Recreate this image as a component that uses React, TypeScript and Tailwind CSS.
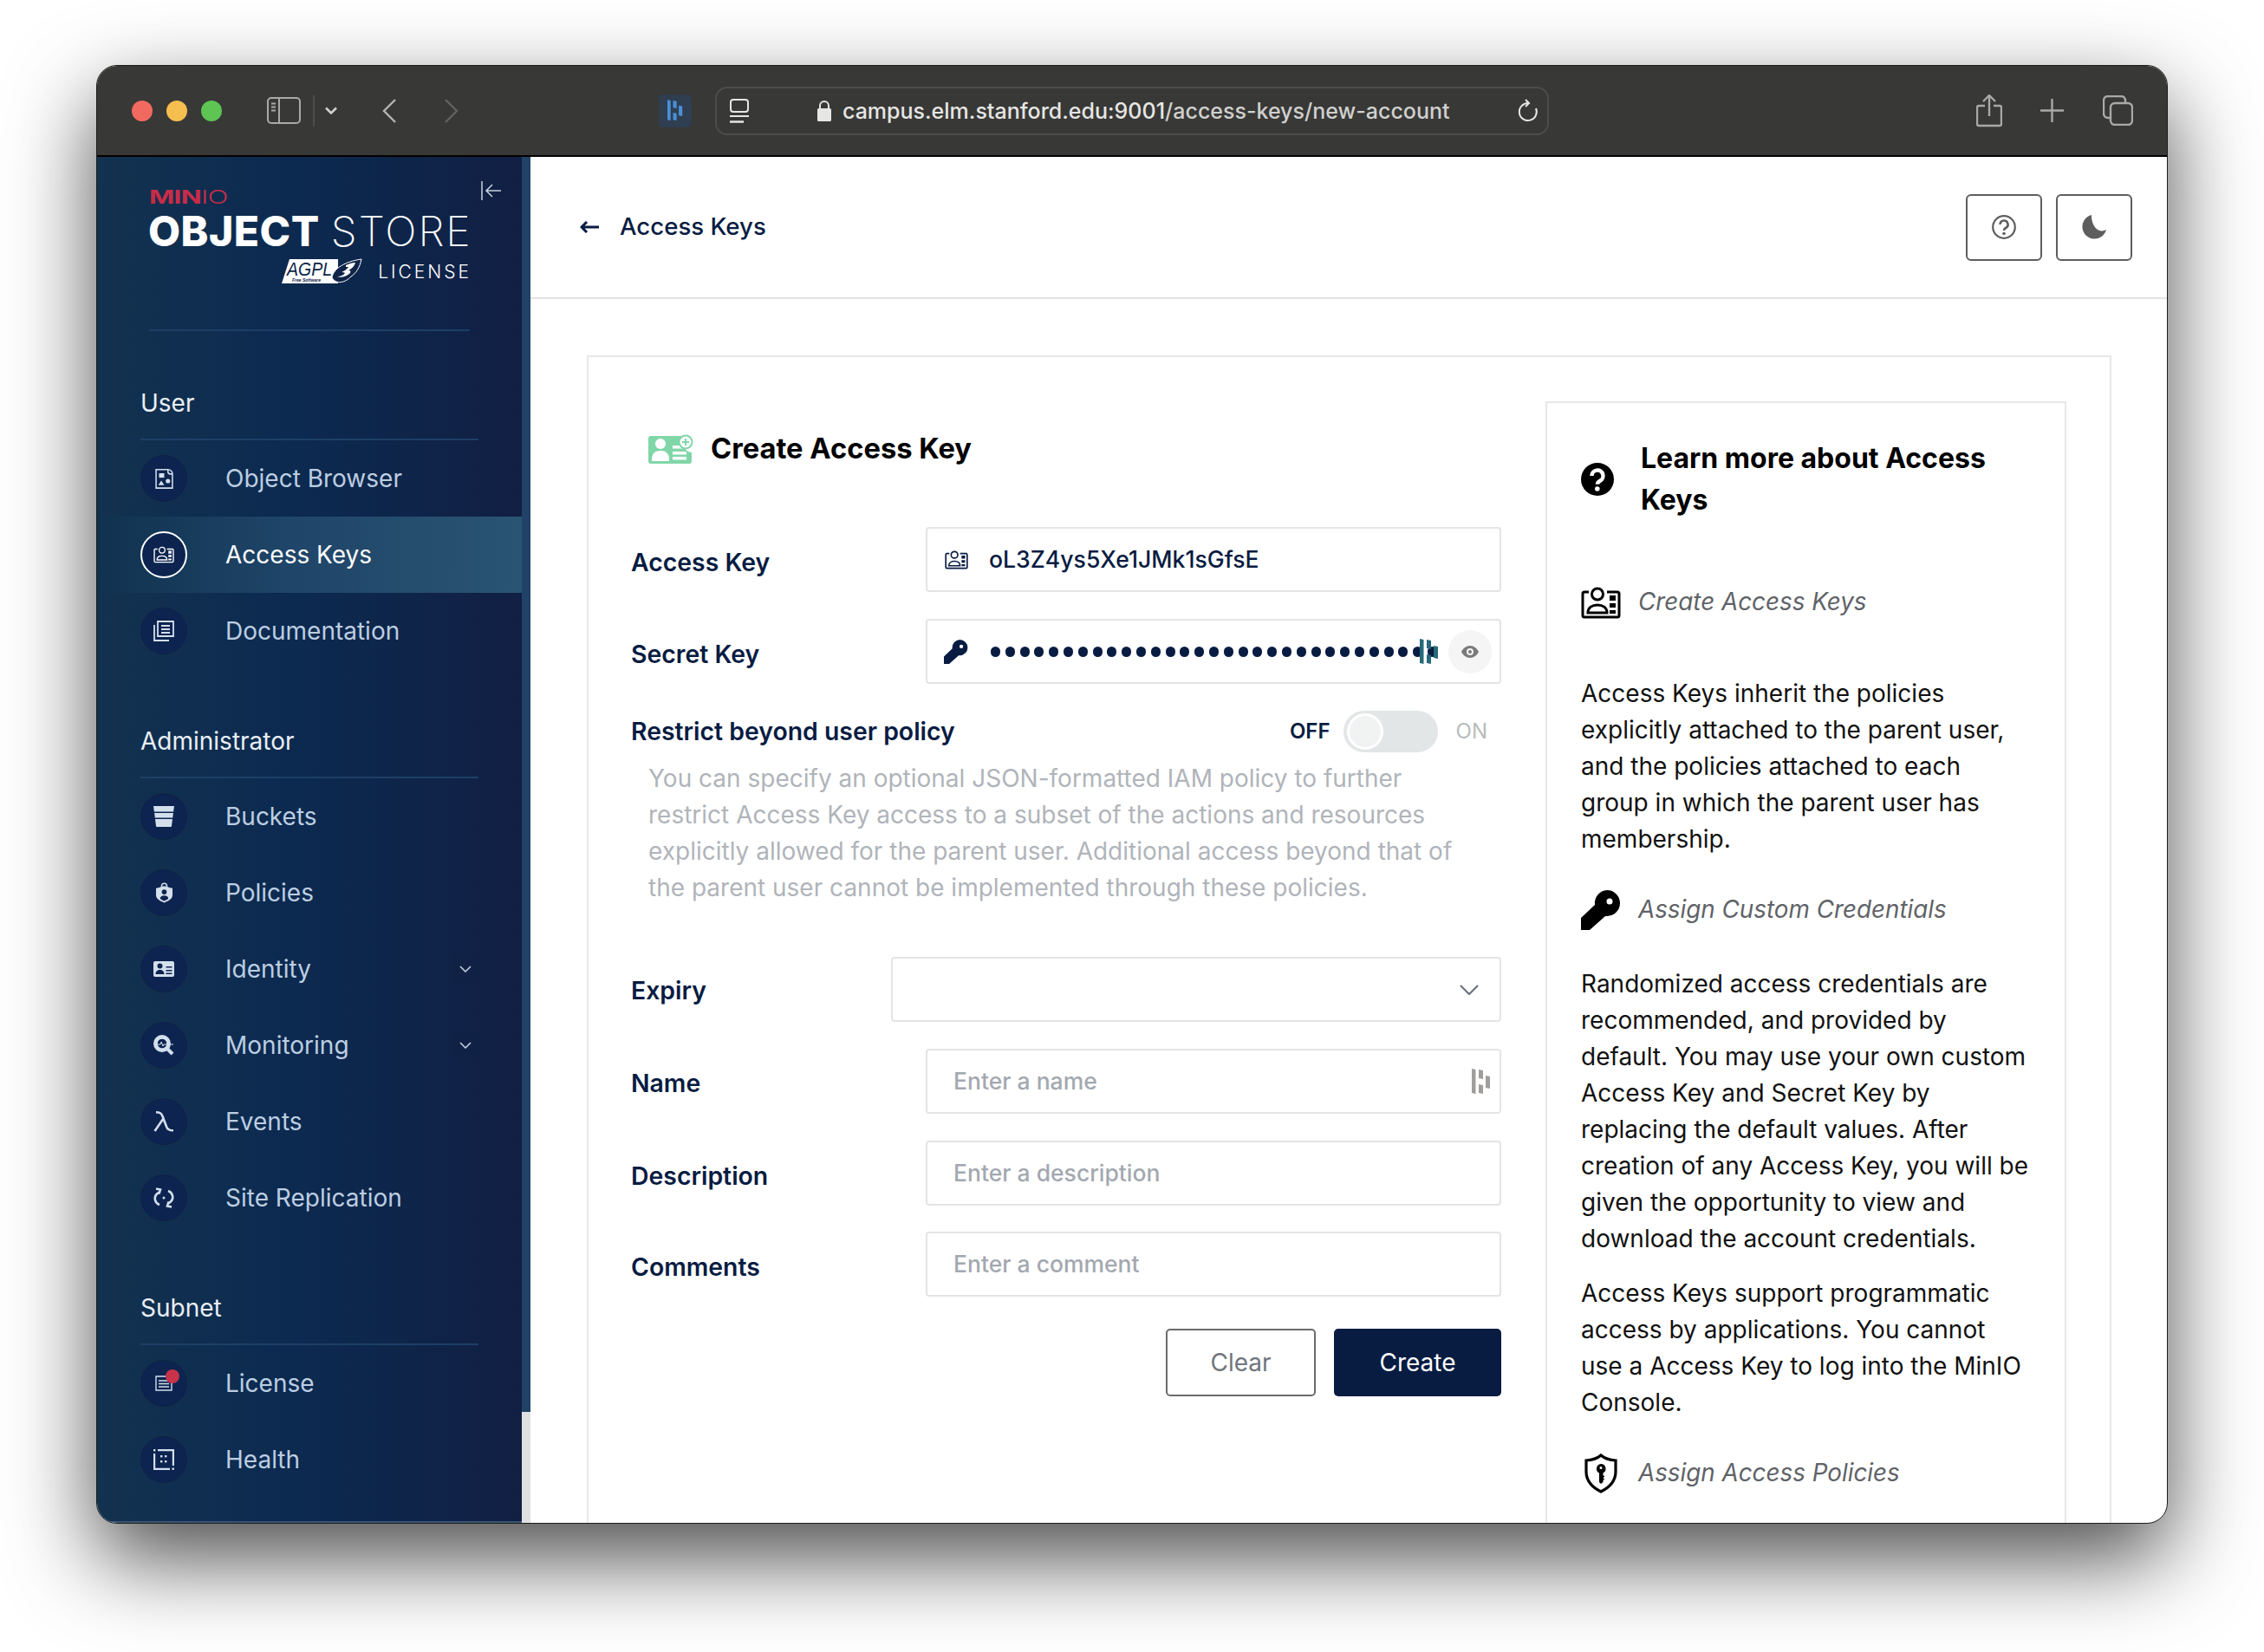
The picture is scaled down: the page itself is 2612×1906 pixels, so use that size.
import React from "react";

type IconProps = { className?: string };

const Dash = ({ className = "" }: IconProps) => (
  <svg viewBox="0 0 22 30" className={className} fill="currentColor">
    <path d="M0 0l4.500 1v28l-4.500-1zM8 1l5 1v10l-5-1zM8 18l5 1v10l-5-1zM16 8l5 1v14l-5-1z" />
  </svg>
);

const IdCard = ({ className = "", sw = 3 }: IconProps & { sw?: number }) => (
  <svg viewBox="0 0 46 37" className={className} fill="none" stroke="currentColor" strokeWidth={sw}>
    <path d="M9 6H4a2 2 0 0 0-2 2v25a2 2 0 0 0 2 2h38a2 2 0 0 0 2-2V8a2 2 0 0 0-2-2H30" />
    <circle cx="19" cy="8.500" r="6.500" />
    <path d="M8 30c0-6 5-9 11-9s11 3 11 9z" />
    <path d="M33 10h7v6h-7zM33 19h7v5h-7zM33 27h7v4h-7z" fill="currentColor" stroke="none" />
  </svg>
);

const KeyIcon = ({ className = "" }: IconProps) => (
  <svg viewBox="0 0 46 46" className={className} fill="currentColor">
    <path
      fillRule="evenodd"
      d="M30 0a15 15 0 0 1 0 30h-2L10 46H0V32l16-15A15 15 0 0 1 30 0zm3 9.500a3.500 3.500 0 1 0 0 7 3.500 3.500 0 0 0 0-7z"
    />
  </svg>
);

const Shield = ({ className = "" }: IconProps) => (
  <svg viewBox="0 0 40 46" className={className}>
    <path d="M20 2c4 3.500 10 5.500 17 6v13c0 11-7 18-17 23C10 39 3 32 3 21V8c7-.5 13-2.500 17-6z" fill="none" stroke="currentColor" strokeWidth="3.200" />
    <path fillRule="evenodd" fill="currentColor" d="M20 12a5.500 5.500 0 0 1 2.500 10.400V25l2 1.500-2 1.500 1.500 1.500-1.500 1.500v2L20 35l-2-2V22.400A5.500 5.500 0 0 1 20 12zm0 3a1.500 1.500 0 1 0 0 3 1.500 1.500 0 0 0 0-3z" />
  </svg>
);

const I = {
  browser: (
    <svg viewBox="0 0 24 28" className="w-[21px] h-[24px]" fill="none" stroke="currentColor" strokeWidth="1.800">
      <path d="M1 2h16v3a3 3 0 0 0 3 3h3v19H1zM17 2a6 6 0 0 1 6 6" />
      <rect x="5" y="7" width="7" height="6" fill="currentColor" stroke="none" />
      <path d="M8 17l4 6H4z" fill="currentColor" stroke="none" />
      <circle cx="17" cy="17.500" r="3" fill="currentColor" stroke="none" />
    </svg>
  ),
  keys: <IdCard className="w-[24px] h-[20px]" sw={2.600} />,
  docs: (
    <svg viewBox="0 0 24 24" className="w-[24px] h-[24px]" fill="none" stroke="currentColor" strokeWidth="1.800">
      <path d="M5 1h18v17H5zM9 6h10M9 10h10M9 14h10M1 5v18h17" />
    </svg>
  ),
  bucket: (
    <svg viewBox="0 0 24 24" className="w-[24px] h-[24px]" fill="currentColor">
      <path d="M0 0h24l-.9 6.500H.9zM1.100 8h21.800l-.7 5.500H1.800zM2 15h20l-1 8a1 1 0 0 1-1 1H4a1 1 0 0 1-1-1z" />
    </svg>
  ),
  policy: (
    <svg viewBox="0 0 20 24" className="w-[19px] h-[24px]" fill="currentColor">
      <path fillRule="evenodd" d="M6 5V4a4 4 0 0 1 8 0v1c2 .8 4 1.200 6 1.500V15c0 4-4 7-10 9C4 22 0 19 0 15V6.500C2 6.200 4 5.800 6 5zm1.500-.6c1.600-.5 3.400-.5 5 0V4a2.500 2.500 0 0 0-5 0zM10 8a3 3 0 1 0 0 6 3 3 0 0 0 0-6zm-5 11c2 1.500 3.500 2.300 5 3 1.500-.7 3-1.500 5-3 0-2-2-3.500-5-3.500S5 17 5 19z" />
    </svg>
  ),
  identity: (
    <svg viewBox="0 0 24 18" className="w-[24px] h-[18px]" fill="currentColor">
      <path fillRule="evenodd" d="M2 0h20a2 2 0 0 1 2 2v14a2 2 0 0 1-2 2H2a2 2 0 0 1-2-2V2a2 2 0 0 1 2-2zm5.500 2.500a3 3 0 1 0 0 6 3 3 0 0 0 0-6zM2.500 15h10c0-3-2-5-5-5s-5 2-5 5zM14.500 6v1.400h7V6zm0 4v1.400h7V10zm0 3.500v1.400h7v-1.400z" />
    </svg>
  ),
  monitor: (
    <svg viewBox="0 0 24 24" className="w-[24px] h-[24px]" fill="none">
      <circle cx="10" cy="10" r="7.500" stroke="currentColor" strokeWidth="5" />
      <path d="M15 15l7 7" stroke="currentColor" strokeWidth="4" />
      <circle cx="10" cy="10" r="5.200" fill="#0d2450" />
      <path d="M5 11h3l1.200-3 1.800 5 1-2h11" stroke="currentColor" strokeWidth="1" />
    </svg>
  ),
  lambda: (
    <svg viewBox="0 0 24 24" className="w-[24px] h-[24px]" fill="none" stroke="currentColor" strokeWidth="2.600">
      <path d="M3 1.300c4 0 6 .5 7.500 4.500l4.500 12c1 3 3 4.500 8 4.500M11.500 8.500L1.500 23" />
    </svg>
  ),
  repl: (
    <svg viewBox="0 0 24 24" className="w-[24px] h-[24px]" fill="none" stroke="currentColor" strokeWidth="2.600">
      <path d="M7 5.500C3 7.500 1.200 11 2 14.500c.6 2.600 2.500 4.700 5 5.500M17 18.500c4-2 5.800-5.500 5-9-.6-2.600-2.500-4.700-5-5.500" />
      <path d="M3 1.500l5 1-1.500 5M21 22.500l-5-1 1.500-5" />
      <circle cx="12" cy="12" r="1.500" fill="currentColor" stroke="none" />
    </svg>
  ),
  license: (
    <svg viewBox="0 0 20 18" className="w-[20px] h-[18px]" fill="none" stroke="currentColor" strokeWidth="1.400">
      <path d="M1 1h18v16H1zM4 6h12M4 9.500h12M4 13h12" />
    </svg>
  ),
  health: (
    <svg viewBox="0 0 24 24" className="w-[24px] h-[24px]" fill="none">
      <path d="M5 1h18v18M1 5v18h18" stroke="currentColor" strokeWidth="2.400" />
      <g fill="currentColor">
        <rect x="0" y="0" width="2.400" height="2.400" />
        <rect x="21.500" y="21.500" width="2.400" height="2.400" />
        <rect x="8" y="7" width="2.400" height="2.400" />
        <rect x="13" y="7" width="2.400" height="2.400" />
        <rect x="8" y="13" width="2.400" height="2.400" />
        <rect x="13" y="13" width="2.400" height="2.400" />
      </g>
    </svg>
  ),
};

const Chevron = ({ className = "" }: IconProps) => (
  <svg viewBox="0 0 14 8" className={className} fill="none" stroke="currentColor" strokeWidth="1.500">
    <path d="M1 1l6 6 6-6" />
  </svg>
);

const Item = ({ icon, label, active, caret, dot }: { icon: React.ReactNode; label: string; active?: boolean; caret?: boolean; dot?: boolean }) => (
  <div
    className={
      "h-[88px] flex items-center pl-[50px] pr-[50px] " +
      (active ? "bg-[linear-gradient(90deg,#10324f_0%,#1f4568_45%,#2a5473_100%)] text-white" : "text-[#bccee2]")
    }
  >
    <div
      className={
        "relative w-[54px] h-[54px] rounded-full bg-[#0d2450] flex items-center justify-center " +
        (active ? "border-2 border-white text-white" : "border border-[#0f2246] text-[#d3dfec]")
      }
    >
      {icon}
      {dot && <span className="absolute top-[10px] right-[8px] w-[16px] h-[16px] rounded-full bg-[#c83349]" />}
    </div>
    <span className="ml-[44px] flex-1 text-[28px] leading-[36px]">{label}</span>
    {caret && (
      <span className="w-[30px] h-[30px] rounded-[4px] bg-[#0f2145] flex items-center justify-center">
        <Chevron className="w-[14px] h-[8px] text-[#c8d6e6]" />
      </span>
    )}
  </div>
);

const SectionHead = ({ label }: { label: string }) => (
  <div className="mt-[54px] ml-[50px] w-[390px] h-[72px] pb-[12px] border-b-2 border-[#1d3f66] flex items-center text-[28px] text-[#e9eff6]">
    {label}
  </div>
);

const Field = ({ label, children, labelW = "w-[340px]", labelPt = "pt-[8px]", className = "" }: { label: string; children: React.ReactNode; labelW?: string; labelPt?: string; className?: string }) => (
  <div className={"h-[75px] flex items-center " + className}>
    <div className={labelW + " " + labelPt + " shrink-0 text-[28.400px] font-semibold text-[#081c42]"}>{label}</div>
    {children}
  </div>
);

const inputBox = "flex-1 h-full border-2 border-[#e4e4e4] rounded-[4px] flex items-center";

const HelpRow = ({ icon, label, className = "" }: { icon: React.ReactNode; label: string; className?: string }) => (
  <div className={"h-[44px] flex items-center " + className}>
    <div className="w-[66px] shrink-0 flex items-center">{icon}</div>
    <span className="italic text-[27.800px] text-[#5f6368]">{label}</span>
  </div>
);

const Para = ({ lines, className = "" }: { lines: string[]; className?: string }) => (
  <p className={"text-[28px] leading-[42px] text-[#111] whitespace-nowrap " + className}>
    {lines.map((l) => (
      <span key={l} className="block">{l}</span>
    ))}
  </p>
);

export default function App() {
  return (
    <div className="w-[2612px] h-[1906px] bg-white pt-[75px] pl-[111px] overflow-hidden [font-family:Inter,sans-serif]">
      <div className="w-[2390px] h-[1683px] rounded-[24px] overflow-hidden border border-[#1c1c1c] shadow-[0_40px_100px_rgba(0,0,0,0.7)] flex flex-col bg-white">
        {/* title bar */}
        <div className="h-[105px] shrink-0 bg-[#383836] border-b-2 border-black flex items-center pl-[40px] text-[#a9a9a7]">
          <span className="w-[24px] h-[24px] rounded-full bg-[#f26a5f]" />
          <span className="ml-[16px] w-[24px] h-[24px] rounded-full bg-[#f5bf4f]" />
          <span className="ml-[16px] w-[24px] h-[24px] rounded-full bg-[#5ec454]" />
          <svg viewBox="0 0 39 31" className="ml-[52px] w-[39px] h-[31px]" fill="none" stroke="currentColor" strokeWidth="2">
            <rect x="1" y="1" width="37" height="29" rx="4" />
            <path d="M14 1v29M5 7.500h5M5 11.500h5M5 15.500h5" />
          </svg>
          <span className="ml-[14px] w-[2px] h-[36px] bg-[#4d4d4b]" />
          <Chevron className="ml-[12px] w-[14px] h-[9px] text-[#d2d2d0] [stroke-width:2.500]" />
          <svg viewBox="0 0 16 28" className="ml-[52px] w-[16px] h-[28px] text-[#b5b5b3]" fill="none" stroke="currentColor" strokeWidth="2.400">
            <path d="M15 1L2 14l13 13" />
          </svg>
          <svg viewBox="0 0 16 28" className="ml-[56px] w-[16px] h-[28px] text-[#626260]" fill="none" stroke="currentColor" strokeWidth="2.400">
            <path d="M1 1l13 13L1 27" />
          </svg>
          <div className="ml-[231px] w-[38px] h-[38px] rounded-[5px] bg-[#2f3e50] flex items-center justify-center">
            <Dash className="w-[18px] h-[25px] text-[#4a8fd8]" />
          </div>
          <div className="ml-[27px] w-[962px] h-[56px] rounded-[14px] border-2 border-[#4c4c4a] flex items-center pl-[14px] text-[#e6e6e4]">
            <svg viewBox="0 0 24 28" className="w-[24px] h-[28px]" fill="none" stroke="currentColor" strokeWidth="2">
              <rect x="2" y="1" width="20" height="14" rx="3" />
              <path d="M1 20h22" />
              <path d="M1 26.500h16" strokeWidth="2.500" />
            </svg>
            <svg viewBox="0 0 16 24" className="ml-[78px] w-[16px] h-[24px]" fill="currentColor">
              <path d="M2 9V6a6 6 0 0 1 12 0v3h.500A1.500 1.500 0 0 1 16 10.500v12a1.500 1.500 0 0 1-1.500 1.500h-13A1.500 1.500 0 0 1 0 22.500v-12A1.500 1.500 0 0 1 1.500 9zm2 0h8V6a4 4 0 0 0-8 0z" />
            </svg>
            <span className="ml-[13px] w-[700px] pt-[2px] text-[25px] font-medium whitespace-nowrap">
              campus.elm.stanford.edu:9001<span className="text-[#d0d0ce]">/access-keys/new-account</span>
            </span>
            <svg viewBox="0 0 24 28" className="ml-[79px] w-[24px] h-[28px]" fill="none" stroke="currentColor" strokeWidth="2">
              <path d="M12 5A10 10 0 1 0 21 11" />
              <path d="M9 1l4 4-4 4" />
            </svg>
          </div>
          <svg viewBox="0 0 30 38" className="ml-[493px] w-[30px] h-[38px]" fill="none" stroke="currentColor" strokeWidth="2.400">
            <path d="M10 13H3a2 2 0 0 0-2 2v19a2 2 0 0 0 2 2h24a2 2 0 0 0 2-2V15a2 2 0 0 0-2-2h-7M15 25V2M8 8l7-7 7 7" />
          </svg>
          <svg viewBox="0 0 27 27" className="ml-[44px] w-[27px] h-[27px]" fill="none" stroke="currentColor" strokeWidth="2.400">
            <path d="M13.500 0v27M0 13.500h27" />
          </svg>
          <svg viewBox="0 0 35 35" className="ml-[45px] w-[35px] h-[35px]" fill="none" stroke="currentColor" strokeWidth="2.400">
            <rect x="9" y="9" width="25" height="25" rx="5" />
            <path d="M9 26H6a5 5 0 0 1-5-5V6a5 5 0 0 1 5-5h15a5 5 0 0 1 5 5v3" />
          </svg>
        </div>

        <div className="flex-1 min-h-0 flex">
          {/* sidebar */}
          <div className="w-[490px] shrink-0 bg-[linear-gradient(90deg,#13324f_0%,#0c2a50_45%,#111f43_100%)] border-b-2 border-[#3a5676] overflow-hidden">
            <div className="relative h-[201px] ml-[60px] w-[370px] border-b-2 border-[#1d3f66]">
              <button className="absolute right-[-37px] top-[27px] text-[#c9d3de]">
                <svg viewBox="0 0 24 24" className="w-[24px] h-[24px] block" fill="none" stroke="currentColor" strokeWidth="1.500">
                  <path d="M1 1v22M23 12H6M13 5l-7 7 7 7" />
                </svg>
              </button>
              <div className="pt-[35px] h-[59px] text-[21px] leading-[24px] text-[#c72c48] origin-left scale-x-[1.500] font-bold whitespace-nowrap tracking-[-0.500px]">
                MIN<span className="font-light">IO</span>
              </div>
              <div className="mt-[2px] -ml-[1px] h-[50px] text-[48px] leading-[50px] text-white whitespace-nowrap flex">
                <span className="font-extrabold tracking-[0.500px]">OBJECT</span>
                <span className="ml-[13px] font-extralight tracking-[2px]">STORE</span>
              </div>
              <div className="mt-[6px] flex justify-end items-center h-[30px]">
                <svg viewBox="0 0 94 30" className="w-[94px] h-[30px]">
                  <path d="M9 1h56v28H0z" fill="#fff" />
                  <text x="6" y="20" fontSize="22" fontStyle="italic" fontWeight="400" fill="#0e2448" fontFamily="Liberation Sans, sans-serif" textLength="52" lengthAdjust="spacingAndGlyphs">AGPL</text>
                  <text x="12" y="27" fontSize="5" fontStyle="italic" fontWeight="700" fill="#0e2448" fontFamily="Liberation Sans, sans-serif">Free Software</text>
                  <path d="M58 22c2-10 14-18 34-21-2 10-6 16-12 20-6 7-18 10-22 1z" fill="#0e2448" stroke="#fff" strokeWidth="1" />
                  <path d="M74 8c4-2 8-3 11-3-1 4-4 7-8 9 3 0 3 2 1 4-4 3-10 5-14 3 4 0 8-2 9-4-1-1-3-1-4-1 3-1 6-3 8-6-1 0-2 0-3 0z" fill="#fff" />
                </svg>
                <span className="ml-[17px] mr-[-2px] text-[21px] text-white font-light tracking-[3px] leading-none">LICENSE</span>
              </div>
            </div>

            <SectionHead label="User" />
            <Item icon={I.browser} label="Object Browser" />
            <Item icon={I.keys} label="Access Keys" active />
            <Item icon={I.docs} label="Documentation" />

            <SectionHead label="Administrator" />
            <Item icon={I.bucket} label="Buckets" />
            <Item icon={I.policy} label="Policies" />
            <Item icon={I.identity} label="Identity" caret />
            <Item icon={I.monitor} label="Monitoring" caret />
            <Item icon={I.lambda} label="Events" />
            <Item icon={I.repl} label="Site Replication" />

            <SectionHead label="Subnet" />
            <Item icon={I.license} label="License" dot />
            <Item icon={I.health} label="Health" />
          </div>

          {/* scrollbar */}
          <div className="w-[10px] shrink-0 flex flex-col">
            <div className="h-[1448px] bg-[#1f4266]" />
            <div className="flex-1 bg-[#e0e0e0]" />
          </div>

          {/* main */}
          <div className="flex-1 min-w-0 overflow-hidden">
            <div className="h-[164px] border-b-2 border-[#e4e4e4] flex items-center justify-between pl-[57px] pr-[40px]">
              <div className="flex items-center text-[#081c42]">
                <svg viewBox="0 0 22 14" className="w-[22px] h-[14px]" fill="none" stroke="currentColor" strokeWidth="3">
                  <path d="M22 7H3M8 1L2 7l6 6" />
                </svg>
                <span className="ml-[24px] text-[27.600px] font-medium">Access Keys</span>
              </div>
              <div className="flex gap-[16px]">
                <div className="w-[88px] h-[77px] border-2 border-[#5e5e5e] rounded-[6px] flex items-center justify-center text-[#5e5e5e]">
                  <svg viewBox="0 0 28 28" className="w-[28px] h-[28px]" fill="none" stroke="currentColor" strokeWidth="2.200">
                    <circle cx="14" cy="14" r="12.800" />
                    <path d="M9.500 11a4.500 4.500 0 1 1 6.500 4c-1.300.7-2 1.500-2 3" strokeWidth="2.600" />
                    <circle cx="14" cy="21.500" r="1.800" fill="currentColor" stroke="none" />
                  </svg>
                </div>
                <div className="w-[88px] h-[77px] border-2 border-[#5e5e5e] rounded-[6px] flex items-center justify-center text-[#5e5e5e]">
                  <svg viewBox="0 0 28 28" className="w-[28px] h-[28px]" fill="currentColor">
                    <path d="M11 0A14 14 0 1 0 28 17c-2.500 1.500-6 2-9 .5C14 15 10.500 7 11 0z" />
                  </svg>
                </div>
              </div>
            </div>

            {/* card */}
            <div className="mt-[65px] ml-[65px] w-[1759px] h-[1400px] border-2 border-[#e8e8e8] flex">
              {/* form */}
              <div className="ml-[49px] w-[1004px] shrink-0">
                <div className="mt-[79px] h-[54px] pl-[20px] flex items-center">
                  <svg viewBox="0 0 52 34" className="w-[52px] h-[34px]">
                    <path d="M3 2h38v10a9 9 0 0 0 9 9v10a3 3 0 0 1-3 3H3a3 3 0 0 1-3-3V5a3 3 0 0 1 3-3z" fill="#81d6a8" />
                    <circle cx="14" cy="11" r="6" fill="#fff" />
                    <path d="M4 29c0-7 4-10 10-10s10 3 10 10v2H4z" fill="#fff" />
                    <rect x="28" y="13" width="12" height="3.500" fill="#fff" />
                    <rect x="28" y="20" width="16" height="3.500" fill="#fff" />
                    <rect x="28" y="26" width="16" height="3.500" fill="#fff" />
                    <circle cx="43" cy="9" r="7.500" fill="#fff" stroke="#81d6a8" strokeWidth="2" />
                    <path d="M43 5v8M39 9h8" stroke="#81d6a8" strokeWidth="2" />
                  </svg>
                  <span className="ml-[20px] text-[32.700px] font-bold text-black">Create Access Key</span>
                </div>

                <Field label="Access Key" className="mt-[63px]">
                  <div className={inputBox + " pl-[20px] text-[#081c42]"}>
                    <IdCard className="w-[27px] h-[22px]" sw={2.800} />
                    <span className="ml-[24px] text-[26.600px] font-medium">oL3Z4ys5Xe1JMk1sGfsE</span>
                  </div>
                </Field>

                <Field label="Secret Key" className="mt-[31px]">
                  <div className={inputBox + " relative pl-[19px] text-[#081c42]"}>
                    <KeyIcon className="w-[28px] h-[28px]" />
                    <div className="ml-[26px] flex gap-[5.800px]">
                      {Array.from({ length: 31 }).map((_, i) => (
                        <span key={i} className="w-[11px] h-[12px] rounded-full bg-[#081c42]" />
                      ))}
                    </div>
                    <Dash className="absolute left-[567px] top-[21px] w-[24px] h-[30px] text-[#256a7a]" />
                    <div className="absolute right-[9px] top-[11px] w-[50px] h-[50px] rounded-full bg-[#f5f5f5] flex items-center justify-center text-[#7a7a7a]">
                      <svg viewBox="0 0 20 14" className="w-[20px] h-[14px]" fill="currentColor">
                        <path fillRule="evenodd" d="M10 0c4.500 0 8 3 10 7-2 4-5.500 7-10 7S2 11 0 7c2-4 5.500-7 10-7zm0 3a4 4 0 1 0 0 8 4 4 0 0 0 0-8zm0 2a2 2 0 1 1 0 4 2 2 0 0 1 0-4z" />
                      </svg>
                    </div>
                  </div>
                </Field>

                <div className="mt-[31px] h-[48px] flex items-center">
                  <span className="text-[28.400px] font-semibold text-[#081c42] flex-1">Restrict beyond user policy</span>
                  <span className="text-[24px] font-semibold text-[#081c42]">OFF</span>
                  <div className="ml-[15px] w-[109px] h-[48px] rounded-full bg-[#e2e6e6] flex items-center pl-[4px]">
                    <span className="w-[42px] h-[42px] rounded-full bg-[#f1f3f3] border-[3px] border-white" />
                  </div>
                  <span className="ml-[21px] mr-[16px] text-[24px] text-[#b7bcbc]">ON</span>
                </div>

                <p className="mt-[9px] pl-[20px] text-[28px] leading-[42px] text-[#b0b4ba] whitespace-nowrap">
                  <span className="block">You can specify an optional JSON-formatted IAM policy to further</span>
                  <span className="block">restrict Access Key access to a subset of the actions and resources</span>
                  <span className="block">explicitly allowed for the parent user. Additional access beyond that of</span>
                  <span className="block">the parent user cannot be implemented through these policies.</span>
                </p>

                <Field label="Expiry" labelW="w-[300px]" labelPt="pt-[4px]" className="mt-[59px]">
                  <div className={inputBox + " justify-end pr-[24px]"}>
                    <svg viewBox="0 0 22 12" className="w-[22px] h-[12px] text-[#6d7280]" fill="none" stroke="currentColor" strokeWidth="2.200">
                      <path d="M1 1l10 10L21 1" />
                    </svg>
                  </div>
                </Field>

                <Field label="Name" labelPt="pt-[6px]" className="mt-[31px]">
                  <div className={inputBox + " pl-[30px] pr-[10px] justify-between"}>
                    <span className="text-[26.500px] font-medium text-[#a3a8b0]">Enter a name</span>
                    <Dash className="w-[22px] h-[30px] text-[#a09d9b]" />
                  </div>
                </Field>

                <Field label="Description" className="mt-[31px]">
                  <div className={inputBox + " pl-[30px]"}>
                    <span className="text-[26.500px] font-medium text-[#a3a8b0]">Enter a description</span>
                  </div>
                </Field>

                <Field label="Comments" className="mt-[30px]">
                  <div className={inputBox + " pl-[30px]"}>
                    <span className="text-[26.500px] font-medium text-[#a3a8b0]">Enter a comment</span>
                  </div>
                </Field>

                <div className="mt-[37px] flex justify-end gap-[21px]">
                  <div className="w-[173px] h-[78px] rounded-[5px] border-2 border-[#6b6b6b] flex items-center justify-center text-[28px] text-[#70757c]">Clear</div>
                  <div className="w-[193px] h-[78px] rounded-[5px] bg-[#081c42] flex items-center justify-center text-[28px] text-white">Create</div>
                </div>
              </div>

              {/* help */}
              <div className="ml-[51px] mt-[51px] w-[601px] h-[1300px] border-2 border-[#e8e8e8] pl-[39px]">
                <div className="mt-[40px] flex items-center">
                  <svg viewBox="0 0 38 38" className="w-[38px] h-[38px] shrink-0">
                    <circle cx="19" cy="19" r="19" fill="#000" />
                    <path d="M12.500 15a6.500 6.500 0 1 1 9.500 5.800c-2 1-3 2-3 4" fill="none" stroke="#fff" strokeWidth="4.500" />
                    <circle cx="18.800" cy="30" r="2.800" fill="#fff" />
                  </svg>
                  <div className="ml-[31px] text-[32px] leading-[48px] font-bold text-black whitespace-nowrap">
                    <span className="block">Learn more about Access</span>
                    <span className="block">Keys</span>
                  </div>
                </div>

                <HelpRow className="mt-[72px] text-black" icon={<IdCard className="w-[46px] h-[37px]" />} label="Create Access Keys" />
                <Para
                  className="mt-[62px]"
                  lines={[
                    "Access Keys inherit the policies",
                    "explicitly attached to the parent user,",
                    "and the policies attached to each",
                    "group in which the parent user has",
                    "membership.",
                  ]}
                />
                <HelpRow className="mt-[39px] text-black" icon={<KeyIcon className="w-[46px] h-[46px]" />} label="Assign Custom Credentials" />
                <Para
                  className="mt-[42px]"
                  lines={[
                    "Randomized access credentials are",
                    "recommended, and provided by",
                    "default. You may use your own custom",
                    "Access Key and Secret Key by",
                    "replacing the default values. After",
                    "creation of any Access Key, you will be",
                    "given the opportunity to view and",
                    "download the account credentials.",
                  ]}
                />
                <Para
                  className="mt-[21px]"
                  lines={[
                    "Access Keys support programmatic",
                    "access by applications. You cannot",
                    "use a Access Key to log into the MinIO",
                    "Console.",
                  ]}
                />
                <HelpRow className="mt-[39px] text-black" icon={<Shield className="ml-[3px] w-[40px] h-[46px]" />} label="Assign Access Policies" />
              </div>
            </div>
          </div>
        </div>
      </div>
    </div>
  );
}
